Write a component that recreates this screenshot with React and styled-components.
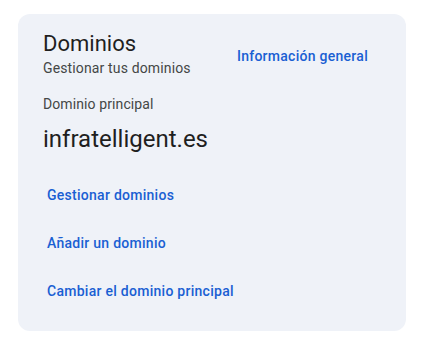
import React from "react";
import styled, { createGlobalStyle } from "styled-components";

const Global = createGlobalStyle`
  html, body { margin: 0; padding: 0; background: #ffffff; }
  body { font-family: Roboto, "Noto Sans", Arial, sans-serif; -webkit-font-smoothing: antialiased; }
`;

const Page = styled.div`
  padding: 14px 16px 0 18px;
`;

const Card = styled.section`
  box-sizing: border-box;
  width: 388px;
  height: 317px;
  background: #eff2f8;
  border-radius: 12px;
  padding: 16px 25px 16px 25px;
  display: flex;
  flex-direction: column;
`;

const Header = styled.div`
  display: flex;
  justify-content: space-between;
  align-items: flex-start;
`;

const TitleBlock = styled.div`
  display: flex;
  flex-direction: column;
`;

const Title = styled.h2`
  margin: 0;
  font-size: 22px;
  line-height: 28px;
  font-weight: 400;
  color: #1f1f1f;
`;

const Subtitle = styled.div`
  font-size: 14px;
  line-height: 20px;
  letter-spacing: 0.14px;
  color: #444746;
`;

const Link = styled.a`
  font-size: 14px;
  line-height: 20px;
  font-weight: 500;
  letter-spacing: 0.27px;
  color: #1a5fd3;
  text-decoration: none;
  cursor: pointer;
  margin-top: ${(p) => p.$top || 0}px;
  margin-right: ${(p) => p.$right || 0}px;
`;

const Label = styled.div`
  margin-top: 16px;
  font-size: 14px;
  line-height: 20px;
  letter-spacing: 0.1px;
  color: #444746;
`;

const Domain = styled.div`
  margin-top: 9px;
  font-size: 24px;
  line-height: 32px;
  color: #1f1f1f;
`;

const Actions = styled.ul`
  list-style: none;
  margin: 16px 0 0 0;
  padding: 0;
  display: flex;
  flex-direction: column;
`;

const ActionRow = styled.li`
  height: 48px;
  display: flex;
  align-items: center;
  padding-left: 4px;
`;

export default function App() {
  const actions = ["Gestionar dominios", "Añadir un dominio", "Cambiar el dominio principal"];
  return (
    <>
      <Global />
      <Page>
        <Card>
          <Header>
            <TitleBlock>
              <Title>Dominios</Title>
              <Subtitle>Gestionar tus dominios</Subtitle>
            </TitleBlock>
            <Link $top={16} $right={13}>Información general</Link>
          </Header>
          <Label>Dominio principal</Label>
          <Domain>infratelligent.es</Domain>
          <Actions>
            {actions.map((a) => (
              <ActionRow key={a}>
                <Link>{a}</Link>
              </ActionRow>
            ))}
          </Actions>
        </Card>
      </Page>
    </>
  );
}
